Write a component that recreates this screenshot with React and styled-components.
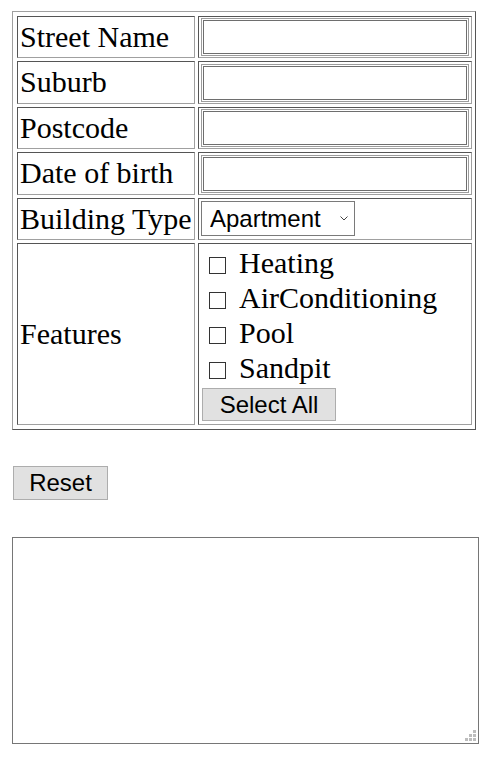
import React from 'react';
import styled, { createGlobalStyle } from 'styled-components';

const GlobalStyle = createGlobalStyle`
  body {
    margin: 0;
    background: #fff;
    font-family: 'Liberation Serif', 'Times New Roman', serif;
    color: #000;
  }
`;

const fields = ['Street Name', 'Suburb', 'Postcode', 'Date of birth'];
const features = ['Heating', 'AirConditioning', 'Pool', 'Sandpit'];

export default function App() {
  return (
    <Page>
      <GlobalStyle />
      <FormGrid>
        {fields.map((name) => (
          <React.Fragment key={name}>
            <LabelCell>{name}</LabelCell>
            <ValueCell>
              <TextInput type="text" />
            </ValueCell>
          </React.Fragment>
        ))}

        <LabelCell>Building Type</LabelCell>
        <ValueCell>
          <SelectWrap>
            <Select defaultValue="Apartment">
              <option>Apartment</option>
              <option>House</option>
              <option>Townhouse</option>
            </Select>
            <Chevron width="8" height="5" viewBox="0 0 8 5">
              <path d="M0.5 0.5 L4 4 L7.5 0.5" fill="none" stroke="#444" strokeWidth="1" />
            </Chevron>
          </SelectWrap>
        </ValueCell>

        <LabelCell>Features</LabelCell>
        <FeatureCell>
          {features.map((f) => (
            <CheckRow key={f}>
              <CheckBox type="checkbox" />
              <span>{f}</span>
            </CheckRow>
          ))}
          <GrayButton $w={134} $h={33} $mt={3} $ml={3}>
            Select All
          </GrayButton>
        </FeatureCell>
      </FormGrid>

      <GrayButton $w={95} $h={34} $mt={36} $ml={1}>
        Reset
      </GrayButton>

      <AreaWrap>
        <TextArea />
        <Grip width="12" height="12" viewBox="0 0 12 12">
          <rect x="8" y="0" width="3" height="3" fill="#bdbdbd" />
          <rect x="4" y="4" width="3" height="3" fill="#bdbdbd" />
          <rect x="8" y="4" width="3" height="3" fill="#bdbdbd" />
          <rect x="0" y="8" width="3" height="3" fill="#bdbdbd" />
          <rect x="4" y="8" width="3" height="3" fill="#bdbdbd" />
          <rect x="8" y="8" width="3" height="3" fill="#bdbdbd" />
        </Grip>
      </AreaWrap>
    </Page>
  );
}

const Page = styled.div`
  padding: 11px 0 20px 12px;
  display: flex;
  flex-direction: column;
  align-items: flex-start;
`;

const FormGrid = styled.div`
  display: grid;
  grid-template-columns: 178px 274px;
  grid-template-rows: 42px 43px 42px 43px 42px 182px;
  gap: 3px;
  padding: 4px 3px 4px 4px;
  border: 1px solid;
  border-color: #a0a0a0 #555 #555 #a0a0a0;
`;

const Cell = styled.div`
  box-sizing: border-box;
  border: 1px solid;
  border-color: #555 #a0a0a0 #a0a0a0 #555;
  display: flex;
  align-items: center;
  font-size: 30px;
  line-height: 34.5px;
  white-space: nowrap;
`;

const LabelCell = styled(Cell)`
  padding: 0 2px;
`;

const ValueCell = styled(Cell)`
  padding: 0 2px;
`;

const FeatureCell = styled(Cell)`
  flex-direction: column;
  align-items: flex-start;
  padding: 1px 0 0 0;
`;

const TextInput = styled.input`
  box-sizing: border-box;
  width: 268px;
  height: 38px;
  margin: 0;
  border: 1px solid #9c9c9c;
  box-shadow: inset 0 0 0 1px #fff, inset 0 0 0 2px #6e6e6e;
  outline: none;
  background: #fff;
`;

const SelectWrap = styled.div`
  position: relative;
  align-self: flex-start;
  margin-top: 2px;
  display: flex;
`;

const Select = styled.select`
  appearance: none;
  box-sizing: border-box;
  width: 154px;
  height: 35px;
  margin: 0;
  padding: 0 0 0 8px;
  border: 1px solid #7a7a7a;
  border-radius: 0;
  background: #fff;
  color: #000;
  font-family: 'Liberation Sans', Arial, sans-serif;
  font-size: 24px;
  outline: none;
`;

const Chevron = styled.svg`
  position: absolute;
  left: 139px;
  top: 15px;
  pointer-events: none;
`;

const CheckRow = styled.label`
  display: flex;
  align-items: flex-start;
  height: 35px;
  font-size: 30px;
  line-height: 35px;
`;

const CheckBox = styled.input`
  appearance: none;
  box-sizing: border-box;
  width: 17px;
  height: 17px;
  margin: 12px 13px 0 10px;
  border: 1px solid #333;
  border-radius: 0;
  background: #fff;
`;

const GrayButton = styled.button`
  box-sizing: border-box;
  width: ${(p) => p.$w}px;
  height: ${(p) => p.$h}px;
  margin: ${(p) => p.$mt}px 0 0 ${(p) => p.$ml}px;
  padding: 0;
  border: 1px solid #adadad;
  border-radius: 0;
  background: #e1e1e1;
  color: #000;
  font-family: 'Liberation Sans', Arial, sans-serif;
  font-size: 24px;
  line-height: 1;
`;

const AreaWrap = styled.div`
  position: relative;
  margin-top: 37px;
  display: flex;
`;

const TextArea = styled.textarea`
  box-sizing: border-box;
  width: 467px;
  height: 207px;
  margin: 0;
  border: 1px solid #767676;
  resize: none;
  outline: none;
`;

const Grip = styled.svg`
  position: absolute;
  right: 2px;
  bottom: 2px;
  pointer-events: none;
`;
